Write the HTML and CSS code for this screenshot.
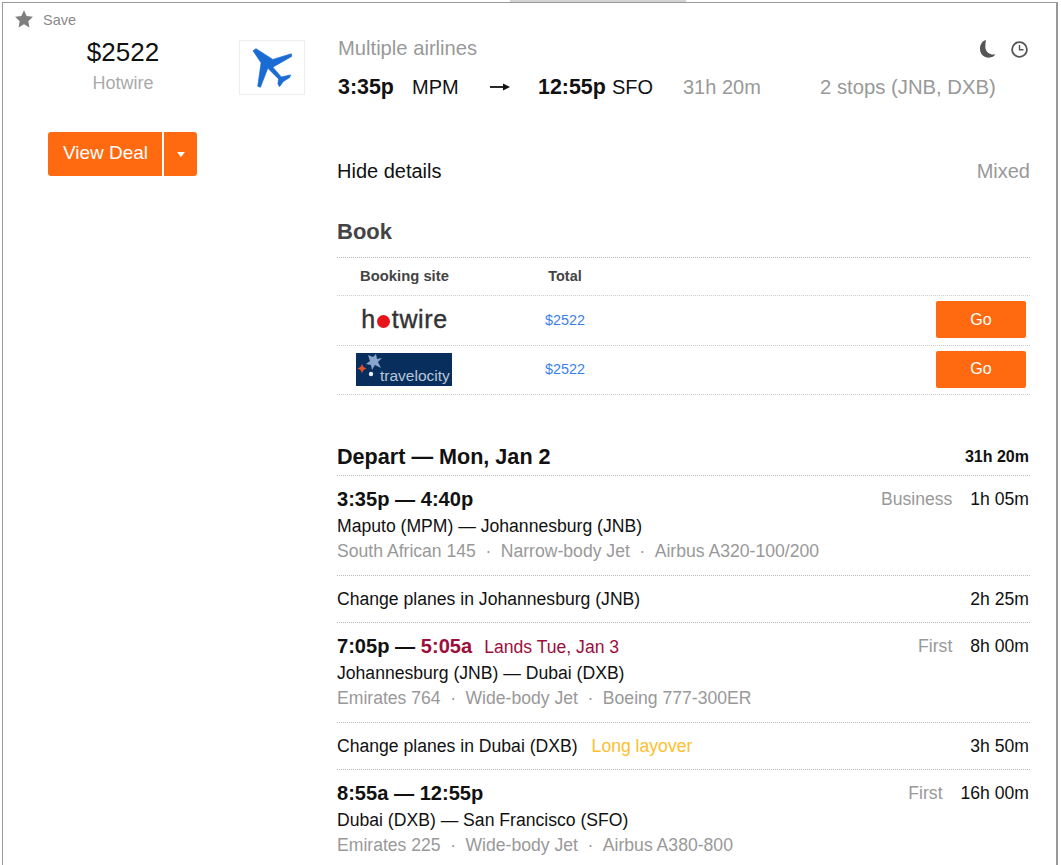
FILE: index.html
```html
<!DOCTYPE html>
<html lang="en">
<head>
<meta charset="utf-8">
<title>Flight result</title>
<link rel="stylesheet" href="styles.css">
</head>
<body>
<div class="tab"></div>
<div class="card">
  <aside class="side">
    <div class="save">
      <svg class="star" viewBox="0 0 24 24" width="20" height="20"><path d="M12 1.600l3.200 6.900 7.500.9-5.500 5.200 1.400 7.500L12 18.400l-6.600 3.700 1.400-7.500L1.300 9.400l7.500-.9z" fill="#7f7f7f"/></svg>
      <span>Save</span>
    </div>
    <div class="price">$2522</div>
    <div class="vendor">Hotwire</div>
    <div class="deal">
      <span class="deal-main">View Deal</span>
      <span class="deal-drop"><i class="caret"></i></span>
    </div>
  </aside>
  <div class="logo-box">
    <svg class="plane" viewBox="40 25 125 125" width="42" height="42"><path d="M46 36L55 30L105 62L160 45L161 53L105 85L130 114L158 108L155 116L136 128L125 143L120 135L122 120L90 88L68 145L60 142L70 72z" fill="#1a6cd4" stroke="#1a6cd4" stroke-width="2" stroke-linejoin="round"/></svg>
  </div>
  <main class="main">
    <div class="airline-row">
      <span class="muted">Multiple airlines</span>
      <span class="flags">
        <svg viewBox="0 0 48 54" width="16" height="18"><path d="M18 0C5 3 0 15 0 27C0 42 12 53 26 53C36 53 43 49 47 43C30 46 16 36 16 20C16 12 17 5 18 0z" fill="#555"/></svg>
        <svg viewBox="0 0 17 17" width="17" height="17"><circle cx="8.500" cy="8.500" r="7.400" fill="none" stroke="#555" stroke-width="1.800"/><path d="M8.500 4V8.800H12.500" fill="none" stroke="#555" stroke-width="1.400"/></svg>
      </span>
    </div>
    <div class="route">
      <b>3:35p</b><span>MPM</span>
      <svg class="arrow" viewBox="0 0 20 10" width="20" height="10"><path d="M0 5H15" stroke="#111" stroke-width="1.800"/><path d="M13 1.500L20 5L13 8.500z" fill="#111"/></svg>
      <b>12:55p</b><span>SFO</span>
      <span class="muted">31h 20m</span><span class="muted stops">2 stops (JNB, DXB)</span>
    </div>
    <div class="details">
      <span>Hide details</span><span class="muted">Mixed</span>
    </div>
    <h2 class="book">Book</h2>
    <div class="book-table">
      <div class="book-row head"><span class="site">Booking site</span><span class="total">Total</span></div>
      <div class="book-row tall">
        <span class="site"><span class="hotwire">h<i class="dot"></i>twire</span></span>
        <span class="total link">$2522</span>
        <span class="go">Go</span>
      </div>
      <div class="book-row">
        <span class="site"><span class="travelocity">
          <svg viewBox="0 0 96 33" width="96" height="33"><path d="M20 1l1 5 5-1-4 4 3 6-6-3-3 5-1-5-5-1 4-3-2-6 5 2z" fill="#8aa5cc"/><path d="M6 11l1.500 3 3 1.500-3 1.500L6 20l-1.500-3-3-1.500 3-1.500z" fill="#e0502a"/><circle cx="15" cy="21" r="2.200" fill="#e8eef5"/></svg>
          <em>travelocity</em></span></span>
        <span class="total link">$2522</span>
        <span class="go">Go</span>
      </div>
    </div>
    <div class="depart"><span>Depart — Mon, Jan 2</span><b>31h 20m</b></div>
    <section class="leg">
      <div class="leg-top"><b class="times">3:35p — 4:40p</b><span class="leg-right"><span class="muted">Business</span><span>1h 05m</span></span></div>
      <div class="leg-line">Maputo (MPM) — Johannesburg (JNB)</div>
      <div class="leg-line muted">South African 145<i class="sep">·</i>Narrow-body Jet<i class="sep">·</i>Airbus A320-100/200</div>
    </section>
    <div class="layover"><span>Change planes in Johannesburg (JNB)</span><span>2h 25m</span></div>
    <section class="leg">
      <div class="leg-top"><span><b class="times">7:05p — <span class="red">5:05a</span></b><span class="red lands">Lands Tue, Jan 3</span></span><span class="leg-right"><span class="muted">First</span><span>8h 00m</span></span></div>
      <div class="leg-line">Johannesburg (JNB) — Dubai (DXB)</div>
      <div class="leg-line muted">Emirates 764<i class="sep">·</i>Wide-body Jet<i class="sep">·</i>Boeing 777-300ER</div>
    </section>
    <div class="layover"><span>Change planes in Dubai (DXB)<span class="long">Long layover</span></span><span>3h 50m</span></div>
    <section class="leg last">
      <div class="leg-top"><b class="times">8:55a — 12:55p</b><span class="leg-right"><span class="muted">First</span><span>16h 00m</span></span></div>
      <div class="leg-line">Dubai (DXB) — San Francisco (SFO)</div>
      <div class="leg-line muted">Emirates 225<i class="sep">·</i>Wide-body Jet<i class="sep">·</i>Airbus A380-800</div>
    </section>
  </main>
</div>
</body>
</html>
```
FILE: styles.css
```css
* { box-sizing: border-box; }
html, body { margin: 0; padding: 0; height: 865px; overflow: hidden; background: #fff; }
body { font-family: "Liberation Sans", Arial, sans-serif; color: #111; font-size: 17.6px; position: relative; }
.tab { position: absolute; left: 510px; top: 0; width: 176px; height: 2px; background: #d4d4d4; }
.card { margin: 2px 3px 0 2px; height: 863px; border: solid #999; border-width: 1px 2px 0 1px; display: flex; background: #fff; overflow: hidden; }
.side { width: 236px; flex: none; padding-left: 4px; }
.save { height: 33px; display: flex; align-items: center; padding: 0 0 0 7px; gap: 9px; font-size: 14.500px; color: #8a8a8a; }
.star { display: block; margin-top: -2px; }
.price { font-size: 26px; line-height: 32px; text-align: center; color: #111; }
.vendor { font-size: 18px; line-height: 30px; text-align: center; color: #aaa; }
.deal { display: flex; margin: 34px 0 0 41px; width: 149px; height: 44px; color: #fff; font-size: 19px; }
.deal-main { width: 115px; padding: 0 0 2px 1px; background: #ff6a10; border-radius: 3px 0 0 3px; border-right: 1px solid #fff; display: flex; align-items: center; justify-content: center; }
.deal-drop { margin-left: 1px; flex: 1; background: #ff6a10; border-radius: 0 3px 3px 0; display: flex; align-items: center; justify-content: center; }
.caret { width: 0; height: 0; border: solid transparent; border-width: 5px 4.500px 0; border-top-color: #fff; }
.logo-box { width: 66px; height: 55px; margin-top: 37px; flex: none; border: 1px solid #eee; display: flex; align-items: center; justify-content: center; }
.main { width: 693px; flex: none; margin-left: 32px; }
.muted { color: #999; }
.airline-row { display: flex; justify-content: space-between; align-items: center; height: 32px; margin-top: 29px; padding: 0 2px 0 1px; font-size: 20.200px; }
.flags { display: flex; gap: 15px; align-items: center; margin-top: 2px; }
.route { display: flex; align-items: center; height: 30px; margin-top: 8px; font-size: 20px; white-space: nowrap; }
.route b { font-weight: 700; font-size: 21.400px; }
.route > :nth-child(1) { width: 74px; margin-left: 1px; }
.route > :nth-child(2) { width: 78px; }
.route > :nth-child(3) { margin-right: 28px; }
.route > :nth-child(4) { width: 74px; }
.route > :nth-child(5) { width: 71px; }
.route > :nth-child(6) { width: 137px; }
.route .stops { font-size: 20.300px; }
.details { display: flex; justify-content: space-between; font-size: 20px; line-height: 30px; margin-top: 54px; }
.book { margin: 31px 0 0; font-size: 22px; line-height: 30px; font-weight: 700; color: #444; height: 40px; }
.book-table { border-top: 1px dotted #bbb; }
.book-row { display: flex; align-items: center; height: 49px; padding-bottom: 2px; border-bottom: 1px dotted #ccc; font-size: 14.400px; }
.book-row.tall { height: 50px; }
.book-row.head { height: 38px; padding-bottom: 1px; font-weight: 700; color: #444; border-bottom-color: #ccc; }
.head .site { font-size: 14.800px; }
.site { width: 135px; text-align: center; flex: none; }
.total { width: 186px; text-align: center; flex: none; }
.link { color: #3b82e8; }
.go { margin-left: auto; margin-right: 4px; width: 90px; height: 37px; background: #ff6a10; color: #fff; font-size: 16px; border-radius: 2px; display: flex; align-items: center; justify-content: center; }
.hotwire { font-size: 25px; color: #333; display: inline-flex; align-items: center; letter-spacing: .6px; -webkit-text-stroke: .4px #333; }
.dot { width: 13px; height: 13px; border-radius: 50%; background: #e8141c; margin: 3px 2px 0 1px; }
.travelocity { display: inline-block; position: relative; width: 96px; height: 33px; margin-left: -1px; background: #082e5e; color: #b8c6d8; overflow: hidden; text-align: left; vertical-align: middle; }
.travelocity svg { position: absolute; left: 0; top: 0; }
.travelocity em { display: block; font-style: normal; font-size: 15.500px; white-space: nowrap; margin: 14px 0 0 24px; line-height: 18px; }
.depart { display: flex; justify-content: space-between; align-items: center; height: 50px; margin-top: 31px; padding: 13px 1px 0 0; font-size: 21.600px; font-weight: 700; border-bottom: 1px dotted #bbb; }
.depart b { font-size: 16px; }
.leg { height: 100px; border-bottom: 1px dotted #bbb; padding: 9px 1px 0 0; }
.leg.last { border-bottom: 0; }
.leg-top { display: flex; justify-content: space-between; align-items: center; height: 28px; margin-bottom: 1px; }
.times { font-size: 20.100px; font-weight: 700; }
.red { color: #9c0f3c; }
.lands { margin-left: 12px; }
.leg-right { display: flex; gap: 18px; }
.leg-line { line-height: 25px; height: 25px; white-space: nowrap; }
.sep { font-style: normal; margin: 0 9.500px; }
.layover { display: flex; justify-content: space-between; align-items: center; height: 47px; padding-right: 1px; border-bottom: 1px dotted #bbb; }
.long { color: #fdc02f; margin-left: 14px; }
```
